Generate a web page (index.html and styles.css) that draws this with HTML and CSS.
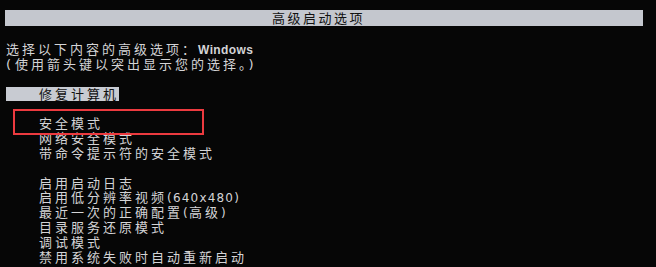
FILE: index.html
```html
<!DOCTYPE html>
<html lang="zh-CN">
<head>
<meta charset="utf-8">
<title>高级启动选项</title>
<link rel="stylesheet" href="styles.css">
</head>
<body>
<div class="screen">
  <div class="titlebar"><span class="title">高级启动选项</span></div>
  <div class="prompt">
    <p class="line">选择以下内容的高级选项：<span class="word">Windows</span></p>
    <p class="line"><span class="paren">(</span>使用箭头键以突出显示您的选择。<span class="paren">)</span></p>
  </div>
  <ul class="menu">
    <li class="line blank"></li>
    <li class="line"><span class="selected">修复计算机</span></li>
    <li class="line blank"></li>
    <li class="line item">安全模式</li>
    <li class="line item">网络安全模式</li>
    <li class="line item">带命令提示符的安全模式</li>
    <li class="line blank"></li>
    <li class="line item">启用启动日志</li>
    <li class="line item">启用低分辨率视频<span class="latin">(640x480)</span></li>
    <li class="line item">最近一次的正确配置<span class="latin">(</span>高级<span class="latin">)</span></li>
    <li class="line item">目录服务还原模式</li>
    <li class="line item">调试模式</li>
    <li class="line item">禁用系统失败时自动重新启动</li>
  </ul>
  <div class="highlight-box"></div>
</div>
</body>
</html>
```

FILE: styles.css
```css
html, body {
  margin: 0;
  padding: 0;
  background: #060606;
}

.screen {
  position: relative;
  width: 656px;
  height: 267px;
  overflow: hidden;
  background: #060606;
  color: #d4d4d6;
  font-family: "Noto Sans CJK SC", "Noto Sans", sans-serif;
  font-size: 13px;
  letter-spacing: 3px;
  padding-top: 10px;
  box-sizing: border-box;
}

.titlebar {
  margin: 0 13px 0 5px;
  height: 16px;
  background: #c4c7ce;
  color: #111;
  display: flex;
  justify-content: center;
  align-items: center;
  padding-right: 11px;
  font-size: 13px;
  letter-spacing: 2.5px;
  line-height: 16px;
}

.prompt {
  margin-top: 16px;
  padding-left: 6px;
}

.line {
  margin: 0;
  height: 14.85px;
  line-height: 14.85px;
  white-space: nowrap;
}

.latin {
  font-family: "DejaVu Sans", "Liberation Sans", sans-serif;
  letter-spacing: 1.2px;
  font-size: 12px;
}

.paren {
  font-family: "DejaVu Sans", "Liberation Sans", sans-serif;
  font-size: 13px;
  letter-spacing: 4px;
}

.word {
  font-family: "Liberation Sans", "DejaVu Sans", sans-serif;
  font-weight: bold;
  font-size: 12px;
  letter-spacing: 0.4px;
}

.menu {
  list-style: none;
  margin: 0;
  padding: 0 0 0 6px;
}

.item {
  padding-left: 33px;
}

.selected {
  display: inline-block;
  height: 14px;
  line-height: 14px;
  vertical-align: top;
  padding-left: 33px;
  background: #c8cbd2;
  color: #111;
}

.highlight-box {
  position: absolute;
  left: 13px;
  top: 109px;
  width: 191px;
  height: 26px;
  border: 2px solid #ec3a3f;
  box-sizing: border-box;
}
```
